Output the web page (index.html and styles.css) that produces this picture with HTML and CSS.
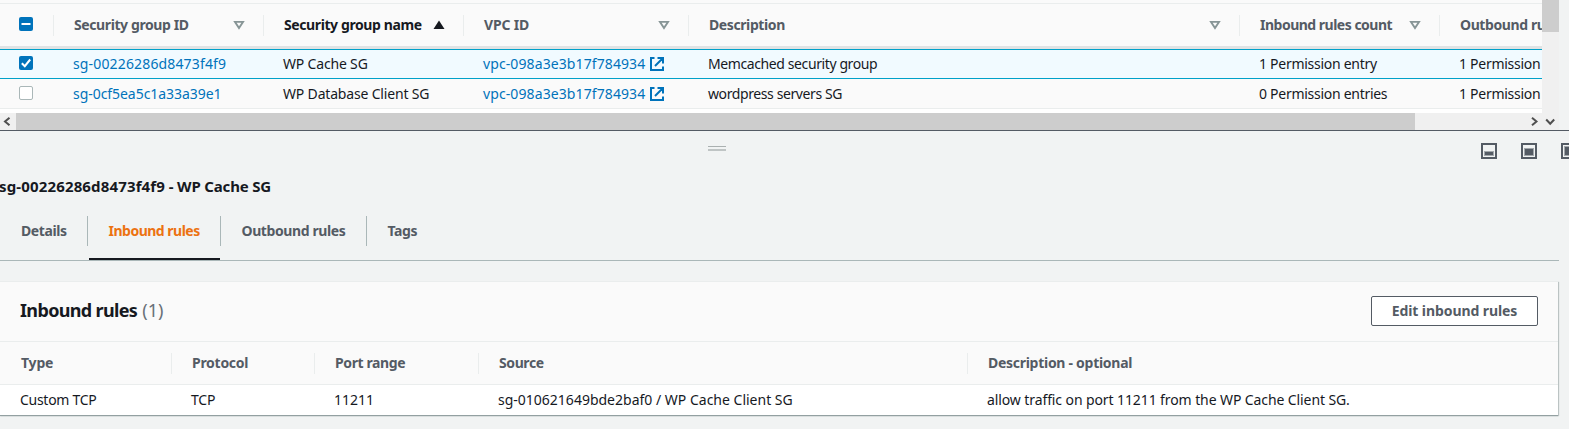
FILE: index.html
```
<!DOCTYPE html>
<html lang="en">
<head>
<meta charset="utf-8">
<title>Security Groups</title>
<link rel="stylesheet" href="styles.css">
</head>
<body>
<svg class="defs" width="0" height="0">
  <symbol id="sort" viewBox="0 0 12 10"><path d="M2 1.900h8L6 8z" fill="none" stroke="#879596" stroke-width="1.900"/></symbol>
  <symbol id="ext" viewBox="0 0 14 14"><path d="M4.500 1H1v12h12V9.500M7.500 1H13v5.500M13 1L5 9" fill="none" stroke="#0073bb" stroke-width="2"/></symbol>
</svg>
<section class="groups">
  <div class="groups-main">
    <div class="table">
      <div class="row head">
        <div class="check"><span class="box on"><svg width="14" height="14"><path d="M2.500 7h9" stroke="#fff" stroke-width="2"/></svg></span></div>
        <div class="th"><span class="tight">Security group ID</span><svg class="sort"><use href="#sort"/></svg></div>
        <div class="th sorted"><span class="tight">Security group name</span><svg class="sort"><path d="M6 .5l5.500 8.500H.5z" fill="#16191f"/></svg></div>
        <div class="th"><span class="snug">VPC ID</span><svg class="sort"><use href="#sort"/></svg></div>
        <div class="th"><span class="tight">Description</span><svg class="sort"><use href="#sort"/></svg></div>
        <div class="th"><span class="tighter">Inbound rules count</span><svg class="sort"><use href="#sort"/></svg></div>
        <div class="th"><span class="tight">Outbound rules count</span></div>
      </div>
      <div class="row selected">
        <div class="check"><span class="box on"><svg width="14" height="14"><path d="M2.800 7.200l3 3L11.200 3.500" fill="none" stroke="#fff" stroke-width="2"/></svg></span></div>
        <div class="td"><a class="wide">sg-00226286d8473f4f9</a></div>
        <div class="td snug">WP Cache SG</div>
        <div class="td"><a class="vpc">vpc-098a3e3b17f784934</a><svg class="ext"><use href="#ext"/></svg></div>
        <div class="td tight">Memcached security group</div>
        <div class="td medium">1 Permission entry</div>
        <div class="td medium">1 Permission</div>
      </div>
      <div class="row last">
        <div class="check"><span class="box"></span></div>
        <div class="td"><a class="even">sg-0cf5ea5c1a33a39e1</a></div>
        <div class="td snug">WP Database Client SG</div>
        <div class="td"><a class="vpc">vpc-098a3e3b17f784934</a><svg class="ext"><use href="#ext"/></svg></div>
        <div class="td tight">wordpress servers SG</div>
        <div class="td medium">0 Permission entries</div>
        <div class="td medium">1 Permission</div>
      </div>
    </div>
    <div class="hscroll">
      <svg width="16" height="17"><path d="M9.500 4.700L5 8.500l4.500 3.800" fill="none" stroke="#505050" stroke-width="2"/></svg>
      <div class="hthumb"></div>
      <svg width="16" height="17"><path d="M6 4.700l4.500 3.800L6 12.300" fill="none" stroke="#505050" stroke-width="2"/></svg>
    </div>
  </div>
  <div class="vscroll">
    <div class="vthumb"></div>
    <svg width="17" height="17"><path d="M4.200 6.500L8.200 10.800l4-4.300" fill="none" stroke="#505050" stroke-width="2"/></svg>
  </div>
</section>
<section class="detail">
  <div class="split-bar">
    <div class="grip"></div>
    <div class="positions">
      <svg width="16" height="16"><path d="M1 1h14v14H1z" fill="none" stroke="#545b64" stroke-width="2"/><path d="M3 8h10v5H3z" fill="#545b64" opacity=".5"/><path d="M4 9h8v3H4z" fill="#545b64"/></svg>
      <svg width="16" height="16"><path d="M1 1h14v14H1z" fill="none" stroke="#545b64" stroke-width="2"/><path d="M3 5h10v8H3z" fill="#545b64" opacity=".5"/><path d="M4 6h8v6H4z" fill="#545b64"/></svg>
      <svg width="16" height="16"><path d="M1 1h14v14H1z" fill="none" stroke="#545b64" stroke-width="2"/><path d="M3 3h10v10H3z" fill="#545b64" opacity=".5"/><path d="M4 4h8v8H4z" fill="#545b64"/></svg>
    </div>
  </div>
  <h1><span class="wide">sg-00226286d8473f4f9</span> - WP Cache SG</h1>
  <nav class="tabs">
    <div class="tab tight">Details</div>
    <div class="tab active tighter">Inbound rules</div>
    <div class="tab tight">Outbound rules</div>
    <div class="tab tight">Tags</div>
  </nav>
  <div class="panel">
    <div class="panel-head">
      <h2>Inbound rules <span>(1)</span></h2>
      <button>Edit inbound rules</button>
    </div>
    <div class="rules rules-head">
      <div class="th snug">Type</div>
      <div class="th medium">Protocol</div>
      <div class="th tight">Port range</div>
      <div class="th tight">Source</div>
      <div class="th medium">Description - optional</div>
    </div>
    <div class="rules rules-row">
      <div class="td medium">Custom TCP</div>
      <div class="td snug">TCP</div>
      <div class="td">11211</div>
      <div class="td">sg-010621649bde2baf0 / WP Cache Client SG</div>
      <div class="td slight">allow traffic on port 11211 from the WP Cache Client SG.</div>
    </div>
  </div>
</section>
</body>
</html>
```
FILE: styles.css
```
* { box-sizing: border-box; }
body {
  margin: 0;
  width: 1569px;
  height: 429px;
  overflow: hidden;
  background: #f1f3f3;
  color: #16191f;
  font: 14px/20px "Noto Sans", "Open Sans", sans-serif;
}
svg { display: block; flex: none; }
.defs { display: none; }

/* tracking steps */
.wide { letter-spacing: .15px; }
.vpc { letter-spacing: .1px; }
.even { letter-spacing: -.05px; }
.slight { letter-spacing: -.1px; }
.snug { letter-spacing: -.18px; }
.medium { letter-spacing: -.28px; }
.tight { letter-spacing: -.4px; }
.tighter { letter-spacing: -.5px; }

/* security group table */
.groups { display: flex; height: 131px; border-bottom: 1px solid #545b64; }
.groups-main { width: 1542px; overflow: hidden; background: #fff; }
.table { width: 1542px; height: 113px; padding-top: 3px; overflow: hidden; background: linear-gradient(#fafafa 109px, #fff 109px); }
.row { display: grid; grid-template-columns: 53px 210px 200px 225px 551px 200px 200px; }
.row > div { display: flex; align-items: center; white-space: nowrap; }
.head { height: 46px; border-top: 1px solid #eaeded; border-bottom: 3px solid #e0e3e4; }
.selected { height: 30px; background: #f1faff; border: solid #00a1c9; border-width: 1px 0; }
.last { height: 30px; border-bottom: 1px solid #eaeded; }
.check { padding-left: 19px; }
.box { width: 14px; height: 14px; border: 1px solid #aab7b8; border-radius: 2px; background: #fff; position: relative; top: -1px; }
.box.on { border: 0; background: #0073bb; }
.th { position: relative; color: #545b64; font-weight: 700; padding-left: 20px; white-space: nowrap; }
.head .th { justify-content: space-between; padding: 0 18px 0 21px; }
.th::before { content: ""; position: absolute; left: 0; top: 11px; width: 1px; height: 21px; background: #eaeded; }
.sorted { color: #16191f; }
.sort { width: 12px; height: 10px; }
.td { padding-left: 20px; }
a { color: #0073bb; }
.ext { width: 14px; height: 14px; margin-left: 5px; }

.hscroll { display: flex; width: 1542px; height: 17px; background: #f0f0f0; }
.hthumb { width: 1399px; margin-right: 111px; background: #cdcdcd; }
.vscroll { display: flex; flex-direction: column; justify-content: space-between; width: 17px; background: #f0f0f0; }
.vthumb { height: 32px; background: #cdcdcd; }

/* split panel */
.split-bar { display: flex; height: 45px; }
.grip { flex: none; width: 18px; height: 5px; margin: 15px 0 0 708px; border-top: 1px solid #aab0b0; border-bottom: 2px solid #bfc4c4; }
.positions { display: flex; flex: none; gap: 24px; margin: 12px 0 0 755px; }
h1 { margin: 0 0 0 -1px; font-size: 15px; line-height: 20px; letter-spacing: -.17px; white-space: nowrap; }
.tabs { display: flex; width: 1559px; height: 46px; margin-top: 19px; border-bottom: 1px solid #aab7b8; color: #545b64; font-weight: 700; }
.tab { position: relative; padding: 6px 20px 0 21px; white-space: nowrap; }
.tab + .tab { padding: 6px 19px 0 21.5px; }
.tab:nth-child(1) { width: 87px; }
.tab:nth-child(2) { width: 133px; }
.tab:nth-child(3) { width: 146px; }
.tab + .tab::before { content: ""; position: absolute; left: 0; top: 1px; width: 1px; height: 30px; background: #aab7b8; }
.active { color: #ec7211; }
.active::after { content: ""; position: absolute; left: 2px; right: 0; bottom: 0; height: 2px; background: #16191f; }

.panel { width: 1558px; margin-top: 20px; background: #fff; border-top: 1px solid #eaeded; box-shadow: 0 1px 1px #93a0a1, 1px 1px 1px #c3caca; }
.panel-head { display: flex; justify-content: space-between; align-items: center; height: 60px; padding: 0 20px 2px; background: #fafafa; border-bottom: 1px solid #eaeded; }
h2 { margin: -1px 0 0; font-size: 18px; line-height: 24px; letter-spacing: -.65px; }
h2 span { margin-left: 1px; color: #687078; font-weight: 400; letter-spacing: 0; }
button { width: 167px; height: 30px; padding: 0; border: 1px solid #545b64; border-radius: 2px; background: #fff; color: #545b64; font: 700 14px/20px "Noto Sans", sans-serif; letter-spacing: -.08px; }
.rules { display: grid; grid-template-columns: 171px 143px 164px 489px 1fr; align-items: center; }
.rules-head { height: 43px; background: #fafafa; border-bottom: 1px solid #eaeded; }
.rules-head .th { padding-left: 21px; }
.rules-head .th::before { top: 0; }
.rules-head .th:first-child::before { display: none; }
.rules-row { height: 30px; }
```
